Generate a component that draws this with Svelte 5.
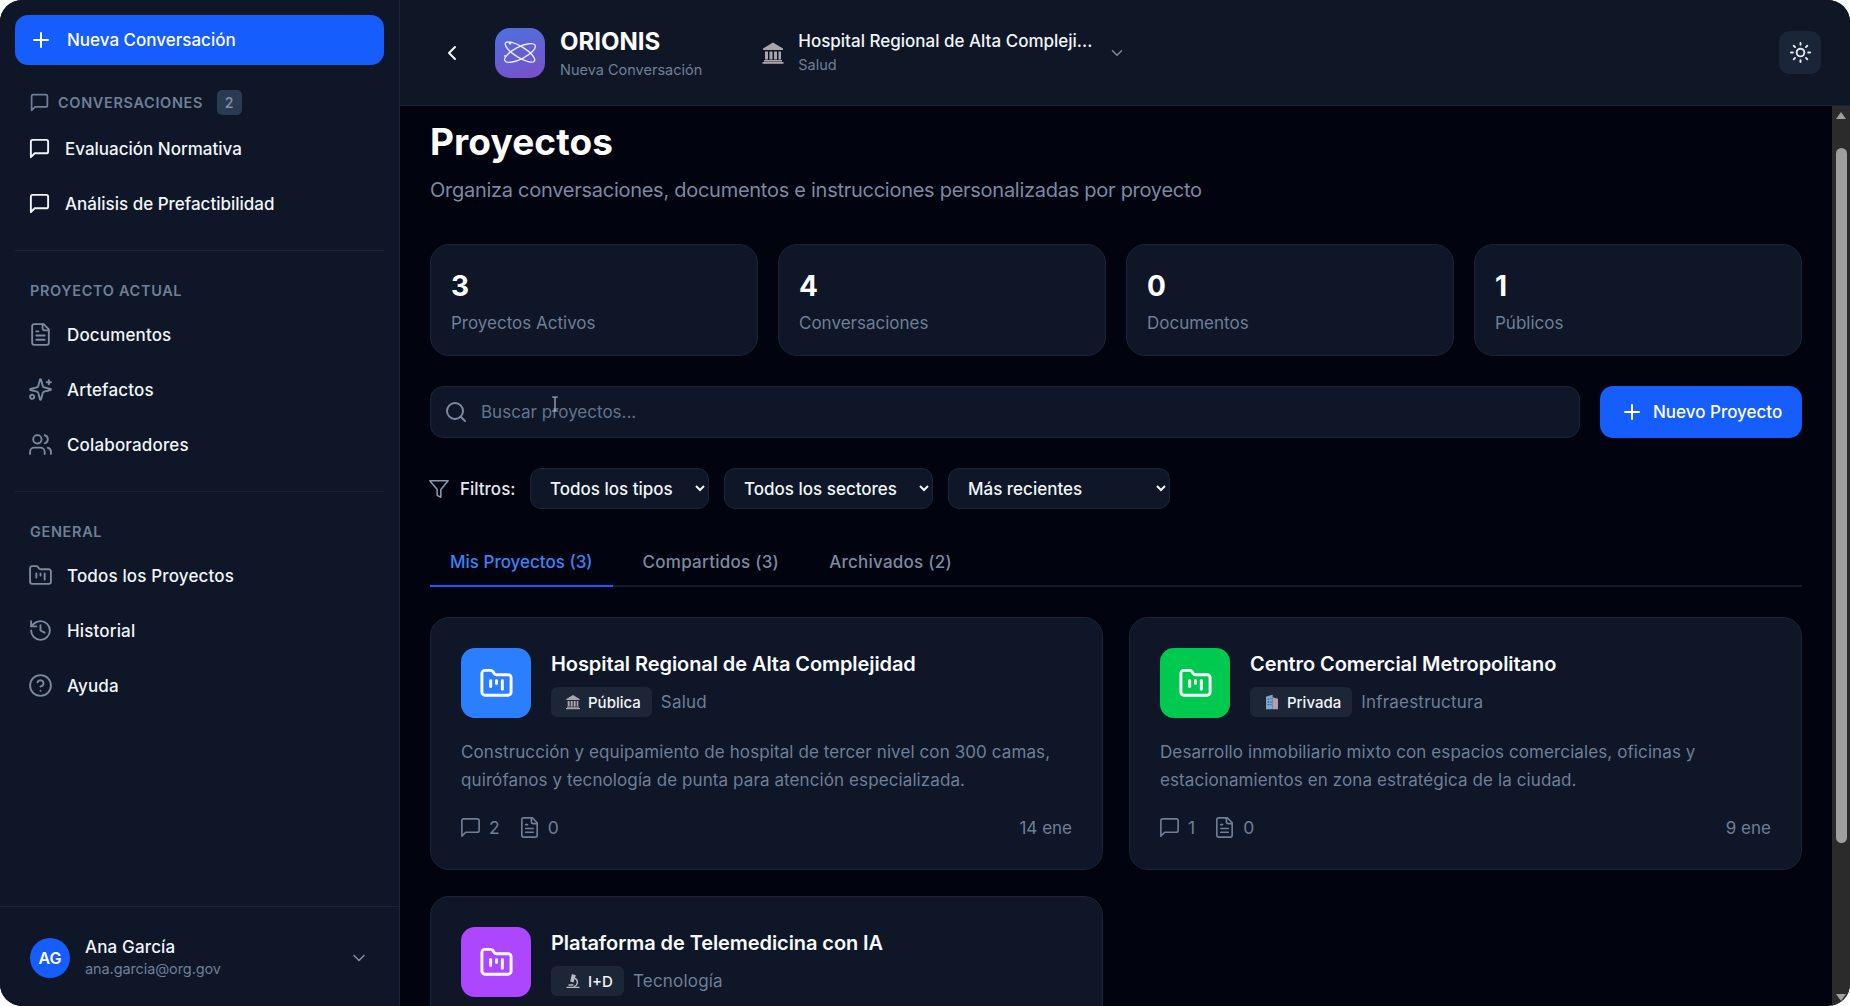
<script>
  const icons = {
    msg: ['M21 15a2 2 0 0 1-2 2H7l-4 4V5a2 2 0 0 1 2-2h14a2 2 0 0 1 2 2z'],
    file: ['M15 2H6a2 2 0 0 0-2 2v16a2 2 0 0 0 2 2h12a2 2 0 0 0 2-2V7Z', 'M14 2v4a2 2 0 0 0 2 2h4', 'M10 9H8', 'M16 13H8', 'M16 17H8'],
    spark: ['M9.937 15.5A2 2 0 0 0 8.5 14.063l-6.135-1.582a.5.5 0 0 1 0-.962L8.5 9.936A2 2 0 0 0 9.937 8.5l1.582-6.135a.5.5 0 0 1 .963 0L14.063 8.5A2 2 0 0 0 15.5 9.937l6.135 1.581a.5.5 0 0 1 0 .964L15.5 14.063a2 2 0 0 0-1.437 1.437l-1.582 6.135a.5.5 0 0 1-.963 0z', 'M20 3v4', 'M22 5h-4', 'M6 19a2 2 0 1 1-4 0 2 2 0 0 1 4 0z'],
    users: ['M16 21v-2a4 4 0 0 0-4-4H6a4 4 0 0 0-4 4v2', 'M13 7a4 4 0 1 1-8 0 4 4 0 0 1 8 0z', 'M22 21v-2a4 4 0 0 0-3-3.87', 'M16 3.13a4 4 0 0 1 0 7.75'],
    folder: ['M4 20h16a2 2 0 0 0 2-2V8a2 2 0 0 0-2-2h-7.93a2 2 0 0 1-1.66-.9l-.82-1.2A2 2 0 0 0 7.93 3H4a2 2 0 0 0-2 2v13c0 1.1.9 2 2 2Z', 'M8 10v4', 'M12 10v2', 'M16 10v6'],
    history: ['M3 12a9 9 0 1 0 9-9 9.75 9.75 0 0 0-6.74 2.74L3 8', 'M3 3v5h5', 'M12 7v5l4 2'],
    help: ['M22 12a10 10 0 1 1-20 0 10 10 0 0 1 20 0z', 'M9.09 9a3 3 0 0 1 5.83 1c0 2-3 3-3 3', 'M12 17h.01'],
    plus: ['M5 12h14', 'M12 5v14'],
    search: ['M19 11a8 8 0 1 1-16 0 8 8 0 0 1 16 0z', 'm21 21-4.3-4.3'],
    filter: ['M22 3H2l8 9.46V19l4 2v-8.54L22 3z'],
    down: ['m6 9 6 6 6-6'],
    left: ['m15 18-6-6 6-6'],
    sun: ['M16 12a4 4 0 1 1-8 0 4 4 0 0 1 8 0z', 'M12 2v2', 'M12 20v2', 'm4.93 4.93 1.41 1.41', 'm17.66 17.66 1.41 1.41', 'M2 12h2', 'M20 12h2', 'm6.34 17.66-1.41 1.41', 'm19.07 4.93-1.41 1.41']
  };

  const projectNav = [
    { icon: 'file', label: 'Documentos' },
    { icon: 'spark', label: 'Artefactos' },
    { icon: 'users', label: 'Colaboradores' }
  ];
  const generalNav = [
    { icon: 'folder', label: 'Todos los Proyectos' },
    { icon: 'history', label: 'Historial' },
    { icon: 'help', label: 'Ayuda' }
  ];
  const stats = [
    { value: '3', label: 'Proyectos Activos' },
    { value: '4', label: 'Conversaciones' },
    { value: '0', label: 'Documentos' },
    { value: '1', label: 'Públicos' }
  ];
  const filters = [
    { w: 'w1', options: ['Todos los tipos', 'Pública', 'Privada', 'I+D'] },
    { w: 'w2', options: ['Todos los sectores', 'Salud', 'Infraestructura', 'Tecnología'] },
    { w: 'w3', options: ['Más recientes', 'Más antiguos', 'Orden alfabético'] }
  ];
  const tabs = ['Mis Proyectos (3)', 'Compartidos (3)', 'Archivados (2)'];
  const projects = [
    { color: 'blue', title: 'Hospital Regional de Alta Complejidad', badge: 'Pública', kind: 'bank', sector: 'Salud',
      desc: 'Construcción y equipamiento de hospital de tercer nivel con 300 camas, quirófanos y tecnología de punta para atención especializada.', chats: 2, docs: 0, date: '14 ene' },
    { color: 'green', title: 'Centro Comercial Metropolitano', badge: 'Privada', kind: 'tower', sector: 'Infraestructura',
      desc: 'Desarrollo inmobiliario mixto con espacios comerciales, oficinas y estacionamientos en zona estratégica de la ciudad.', chats: 1, docs: 0, date: '9 ene' },
    { color: 'purple', title: 'Plataforma de Telemedicina con IA', badge: 'I+D', kind: 'scope', sector: 'Tecnología', desc: '', chats: 0, docs: 0, date: '' }
  ];
</script>

{#snippet icon(name, cls = '')}
  <svg class="ico {cls}" viewBox="0 0 24 24" fill="none" stroke="currentColor" stroke-width="2" stroke-linecap="round" stroke-linejoin="round">
    {#each icons[name] as d}<path {d} />{/each}
  </svg>
{/snippet}

{#snippet bank(cls)}
  <svg class={cls} viewBox="0 0 24 24" fill="#a9a5ad"><path d="M12 1.5 2 7.5v1.5h20V7.5z" /><rect x="4" y="10.5" width="3" height="8" /><rect x="8.5" y="10.5" width="3" height="8" /><rect x="13" y="10.5" width="3" height="8" /><rect x="17.5" y="10.5" width="2.5" height="8" /><rect x="3" y="19" width="18" height="1.6" /><rect x="1.5" y="21" width="21" height="1.8" /></svg>
{/snippet}

{#snippet tower(cls)}
  <svg class={cls} viewBox="0 0 24 24"><path fill="#7fa8cf" d="M3 4l10-3v22H3z" /><path fill="#b79ab3" d="M13 5l8 2v16h-8z" /><path fill="#3f6f9e" d="M5 7h3v2H5zM9.500 6h2v2h-2zM5 11h3v2H5zM9.500 11h2v2h-2zM5 15h3v2H5zM9.500 15h2v2h-2z" /></svg>
{/snippet}

{#snippet scope(cls)}
  <svg class={cls} viewBox="0 0 24 24" fill="none" stroke="#b9bcc6" stroke-width="2" stroke-linecap="round"><path d="M3 21.5h18" /><path d="M11 3l4 1-3 9-3-1z" fill="#b9bcc6" /><path d="M15 8a6.5 6.5 0 0 1-1 12" /><path d="M6 18h6" /></svg>
{/snippet}

<div class="window">
  <aside class="sidebar">
    <div class="side-scroll">
      <button class="new-chat">{@render icon('plus', 'i24')}<span>Nueva Conversación</span></button>

      <div class="conv-head">
        {@render icon('msg', 'i21')}
        <span class="caps">CONVERSACIONES</span>
        <span class="count">2</span>
      </div>
      <a class="conv-item" href="#e">{@render icon('msg', 'i23')}<span>Evaluación Normativa</span></a>
      <a class="conv-item" href="#a">{@render icon('msg', 'i23')}<span>Análisis de Prefactibilidad</span></a>

      <div class="divider"></div>

      <div class="caps section">PROYECTO ACTUAL</div>
      {#each projectNav as n}
        <a class="nav-item" href="#n">{@render icon(n.icon, 'i25 dim')}<span>{n.label}</span></a>
      {/each}

      <div class="divider"></div>

      <div class="caps section">GENERAL</div>
      {#each generalNav as n}
        <a class="nav-item" href="#n">{@render icon(n.icon, 'i25 dim')}<span>{n.label}</span></a>
      {/each}
    </div>

    <div class="user">
      <div class="avatar">AG</div>
      <div class="user-text">
        <div class="user-name">Ana García</div>
        <div class="user-mail">ana.garcia@org.gov</div>
      </div>
      {@render icon('down', 'i20 dim')}
    </div>
  </aside>

  <div class="column">
    <header class="topbar">
      <button class="back">{@render icon('left', 'i24')}</button>
      <div class="logo">
        <svg viewBox="0 0 50 50" fill="none" stroke="#e6e8fb" stroke-width="1.4" stroke-linecap="round">
          <ellipse cx="25" cy="24" rx="17" ry="5.500" transform="rotate(32 25 24)" />
          <ellipse cx="25" cy="25" rx="17" ry="6" transform="rotate(-27 25 25)" />
          <circle cx="15" cy="15" r="1.500" fill="#e6e8fb" stroke="none" />
          <circle cx="10" cy="28" r="1" fill="#e6e8fb" stroke="none" />
        </svg>
      </div>
      <div class="brand">
        <div class="brand-name">ORIONIS</div>
        <div class="brand-sub">Nueva Conversación</div>
      </div>
      <div class="context">
        {@render bank('ctx-bank')}
        <div class="ctx-text">
          <div class="ctx-name">Hospital Regional de Alta Compleji...</div>
          <div class="ctx-sub">Salud</div>
        </div>
        {@render icon('down', 'i18 ctx-down')}
      </div>
      <button class="theme">{@render icon('sun', 'i23')}</button>
    </header>

    <div class="body">
      <main class="content">
        <h1>Proyectos</h1>
        <p class="lead">Organiza conversaciones, documentos e instrucciones personalizadas por proyecto</p>

        <section class="stats">
          {#each stats as s}
            <div class="stat">
              <div class="stat-value">{s.value}</div>
              <div class="stat-label">{s.label}</div>
            </div>
          {/each}
        </section>

        <section class="search-row">
          <label class="search">
            {@render icon('search', 'i24 dim')}
            <input type="text" placeholder="Buscar proyectos..." />
            <svg class="caret" viewBox="0 0 10 16" fill="none" stroke="#b4bac4" stroke-width="1.2" stroke-linecap="round">
              <path d="M2.500 1h5M5 1v14M2.500 15h5" />
            </svg>
          </label>
          <button class="new-project">{@render icon('plus', 'i24')}<span>Nuevo Proyecto</span></button>
        </section>

        <section class="filters">
          {@render icon('filter', 'i22 filter-ico')}
          <span class="filter-label">Filtros:</span>
          {#each filters as f}
            <select class={f.w}>
              {#each f.options as o}<option>{o}</option>{/each}
            </select>
          {/each}
        </section>

        <nav class="tabs">
          {#each tabs as t, i}
            <button class="tab" class:active={i === 0}>{t}</button>
          {/each}
        </nav>

        <section class="grid">
          {#each projects as p}
            <article class="card">
              <div class="card-head">
                <div class="tile {p.color}">{@render icon('folder', 'i35')}</div>
                <div class="card-titles">
                  <h2>{p.title}</h2>
                  <div class="tags">
                    <span class="badge">
                      {#if p.kind === 'bank'}{@render bank('badge-ico')}{:else if p.kind === 'tower'}{@render tower('badge-ico')}{:else}{@render scope('badge-ico')}{/if}
                      {p.badge}
                    </span>
                    <span class="sector">{p.sector}</span>
                  </div>
                </div>
              </div>
              {#if p.desc}
                <p class="desc">{p.desc}</p>
                <div class="meta">
                  <span class="m">{@render icon('msg', 'i23 thin')}{p.chats}</span>
                  <span class="m">{@render icon('file', 'i23 thin')}{p.docs}</span>
                  <span class="date">{p.date}</span>
                </div>
              {/if}
            </article>
          {/each}
        </section>
      </main>

      <div class="scrollbar">
        <span class="arrow up"></span>
        <span class="thumb"></span>
        <span class="arrow dn"></span>
      </div>
    </div>
  </div>
</div>

<style>
  :global(body) {
    margin: 0;
    background: #fff;
    overflow: hidden;
  }
  * { box-sizing: border-box; }
  a { text-decoration: none; color: inherit; }
  button { font: inherit; border: 0; cursor: pointer; }

  .window {
    width: 1850px;
    height: 1006px;
    display: flex;
    overflow: hidden;
    border-radius: 22px;
    background: #01030f;
    font-family: Inter, "Liberation Sans", sans-serif;
    color: #f1f5f9;
  }
  .ico { flex: none; display: block; }
  .i18 { width: 18px; height: 18px; }
  .i20 { width: 20px; height: 20px; }
  .i21 { width: 21px; height: 21px; }
  .i22 { width: 22px; height: 22px; stroke-width: 1.7; }
  .i23 { width: 23px; height: 23px; }
  .i24 { width: 24px; height: 24px; }
  .i25 { width: 25px; height: 25px; stroke-width: 1.8; }
  .i35 { width: 35px; height: 35px; }
  .thin { stroke-width: 1.7; }
  .dim { color: #7c8aa0; }

  .sidebar {
    width: 400px;
    flex: none;
    display: flex;
    flex-direction: column;
    background: #0e1628;
    border-right: 1px solid #1a2436;
  }
  .side-scroll {
    flex: 1;
    padding: 15px 15px 0;
    display: flex;
    flex-direction: column;
  }
  .new-chat {
    height: 50px;
    display: flex;
    align-items: center;
    gap: 14px;
    padding: 0 0 0 14px;
    border-radius: 13px;
    background: #155dfc;
    color: #fff;
    font-size: 17px;
    font-weight: 500;
  }
  .conv-head {
    display: flex;
    align-items: center;
    gap: 8.5px;
    height: 26px;
    margin-top: 24px;
    padding-left: 13.5px;
    color: #6f7f96;
  }
  .caps {
    font-size: 14.5px;
    font-weight: 600;
    letter-spacing: 0.65px;
    color: #6f7f96;
  }
  .count {
    width: 25px;
    height: 25px;
    margin-left: 5px;
    border-radius: 5px;
    background: #2a3a50;
    display: grid;
    place-items: center;
    font-size: 14px;
    font-weight: 600;
    color: #7c8fa8;
  }
  .conv-item {
    display: flex;
    align-items: center;
    gap: 14px;
    height: 55px;
    padding-left: 13px;
    font-size: 17px;
    font-weight: 500;
    color: #f1f5f9;
  }
  .conv-head + .conv-item { margin-top: 6px; }
  .divider {
    height: 1px;
    background: #1a2436;
    margin-top: 19px;
    flex: none;
  }
  .section {
    padding-left: 15px;
    margin-top: 31px;
    margin-bottom: 7px;
    line-height: 18px;
  }
  .nav-item {
    display: flex;
    align-items: center;
    gap: 14px;
    height: 55px;
    padding-left: 13px;
    font-size: 17px;
    font-weight: 500;
    letter-spacing: 0.15px;
    color: #f1f5f9;
  }
  .user {
    height: 100px;
    border-top: 1px solid #1a2436;
    display: flex;
    align-items: center;
    padding: 2px 30px 0 30px;
    gap: 15px;
  }
  .avatar {
    width: 40px;
    height: 40px;
    border-radius: 50%;
    background: #155dfc;
    display: grid;
    place-items: center;
    font-size: 16px;
    font-weight: 600;
    color: #fff;
    flex: none;
  }
  .user-text { flex: 1; }
  .user-name { font-size: 17px; font-weight: 500; letter-spacing: 0.15px; line-height: 22px; }
  .user-mail { font-size: 14.5px; color: #6f7f96; line-height: 22px; letter-spacing: -0.1px; }

  .column {
    flex: 1;
    min-width: 0;
    display: flex;
    flex-direction: column;
  }
  .topbar {
    height: 106px;
    flex: none;
    display: flex;
    align-items: center;
    background: #0f1727;
    border-bottom: 1px solid #1a2436;
    padding: 0 29px 0 40px;
  }
  .back {
    width: 24px;
    height: 24px;
    padding: 0;
    background: none;
    color: #f1f5f9;
  }
  .logo {
    width: 50px;
    height: 50px;
    margin-left: 31px;
    border-radius: 15px;
    background: linear-gradient(160deg, #4a72e0, #7d4ec6);
    flex: none;
  }
  .logo svg { display: block; }
  .brand { margin-left: 15px; padding-top: 2px; }
  .brand-name { font-size: 24px; font-weight: 700; line-height: 30px; color: #fff; }
  .brand-sub { font-size: 14.5px; line-height: 22px; margin-top: 2px; color: #6f7f96; }
  .context {
    display: flex;
    align-items: center;
    margin-left: 59px;
  }
  .ctx-bank { width: 24px; height: 24px; flex: none; }
  .ctx-text { margin-left: 13px; width: 310px; }
  .ctx-name { font-size: 17px; font-weight: 500; line-height: 24px; margin-top: -2px; color: #f1f5f9; white-space: nowrap; }
  .ctx-sub { font-size: 14.5px; line-height: 20px; margin-top: 2px; color: #6f7f96; }
  .ctx-down { color: #7c8aa0; }
  .theme {
    margin-left: auto;
    width: 42px;
    height: 43px;
    border-radius: 11px;
    background: #1a2638;
    color: #e2e8f0;
    display: grid;
    place-items: center;
    padding: 0;
  }

  .body {
    flex: 1;
    min-height: 0;
    display: flex;
  }
  .content {
    flex: 1;
    min-width: 0;
    overflow: hidden;
    padding: 14px 30px 0;
  }
  h1 {
    margin: 0;
    font-size: 37px;
    line-height: 44px;
    font-weight: 700;
    letter-spacing: 0.1px;
    color: #fff;
  }
  .lead {
    margin: 12px 0 0;
    font-size: 20px;
    line-height: 28px;
    color: #7c8aa0;
    letter-spacing: -0.27px;
  }
  .stats {
    display: grid;
    grid-template-columns: repeat(4, 1fr);
    gap: 20px;
    margin-top: 40px;
  }
  .stat {
    height: 112px;
    padding: 23px 20px 0;
    background: #0e1628;
    border: 1px solid #1b2537;
    border-radius: 19px;
  }
  .stat-value { font-size: 28px; font-weight: 700; line-height: 36px; color: #fff; }
  .stat-label { font-size: 17px; line-height: 26px; margin-top: 6px; color: #6f7f96; }

  .search-row {
    display: flex;
    gap: 20px;
    margin-top: 30px;
  }
  .search {
    flex: 1;
    height: 52px;
    display: flex;
    align-items: center;
    gap: 13px;
    padding-left: 13px;
    background: #0e1628;
    border: 1px solid #1b2537;
    border-radius: 13px;
    position: relative;
  }
  .search input {
    flex: 1;
    background: none;
    border: 0;
    outline: 0;
    padding: 0;
    font: inherit;
    font-size: 17px;
    color: #f1f5f9;
  }
  .search input::placeholder { color: #64748b; opacity: 1; }
  .caret {
    position: absolute;
    left: 119px;
    top: 9px;
    width: 10px;
    height: 16px;
  }
  .new-project {
    width: 202px;
    height: 52px;
    display: flex;
    align-items: center;
    gap: 9px;
    padding-left: 20px;
    border-radius: 13px;
    background: #155dfc;
    color: #fff;
    font-size: 17px;
    font-weight: 500;
  }

  .filters {
    display: flex;
    align-items: center;
    margin-top: 30px;
    height: 41px;
  }
  .filter-ico { color: #8d99ab; margin-left: -2px; }
  .filter-label { margin-left: 10px; font-size: 17px; font-weight: 500; color: #e2e8f0; width: 55px; white-space: nowrap; }
  select {
    height: 41px;
    margin-left: 15px;
    padding: 0 4px 0 15px;
    background: #0e1628;
    border: 1px solid #1b2537;
    border-radius: 11px;
    font: inherit;
    font-size: 17px;
    font-weight: 500;
    color: #f1f5f9;
    color-scheme: dark;
    outline: 0;
  }
  .w1 { width: 179px; }
  .w2 { width: 209px; }
  .w3 { width: 222px; }

  .tabs {
    display: flex;
    margin-top: 24px;
    height: 54px;
    border-bottom: 2px solid #131c2c;
  }
  .tab {
    height: 54px;
    padding: 5px 20px 0;
    margin-right: 10px;
    background: none;
    color: #7c8aa0;
    font-size: 17px;
    font-weight: 500;
    letter-spacing: 0.25px;
    border-bottom: 2px solid transparent;
  }
  .tab.active {
    color: #3b82f6;
    letter-spacing: 0;
    border-bottom-color: #155dfc;
  }

  .grid {
    display: grid;
    grid-template-columns: 1fr 1fr;
    gap: 26px;
    margin-top: 30px;
  }
  .card {
    height: 253px;
    padding: 30px;
    background: #0e1628;
    border: 1px solid #1b2537;
    border-radius: 19px;
  }
  .card-head { display: flex; gap: 20px; }
  .tile {
    width: 70px;
    height: 70px;
    border-radius: 14px;
    display: grid;
    place-items: center;
    color: #fff;
    flex: none;
  }
  .blue { background: #2b7fff; }
  .green { background: #00c950; }
  .purple { background: #ad46ff; }
  h2 {
    margin: 0;
    font-size: 20px;
    line-height: 32px;
    font-weight: 600;
    letter-spacing: -0.08px;
    color: #f8fafc;
  }
  .tags { display: flex; align-items: center; gap: 9px; margin-top: 7px; }
  .badge {
    display: flex;
    align-items: center;
    gap: 7px;
    height: 30px;
    padding: 0 11px 0 14px;
    border-radius: 6px;
    background: #1c2637;
    font-size: 15px;
    font-weight: 500;
    color: #f1f5f9;
  }
  .badge-ico { width: 16px; height: 16px; flex: none; }
  .sector { font-size: 17px; color: #6f7f96; letter-spacing: 0.2px; }
  .desc {
    margin: 20px 0 0;
    font-size: 17px;
    line-height: 28px;
    color: #6f7f96;
    letter-spacing: 0.1px;
  }
  .meta {
    display: flex;
    align-items: center;
    gap: 18px;
    margin-top: 22px;
    margin-left: -2px;
    font-size: 17.5px;
    color: #6f7f96;
  }
  .m { display: flex; align-items: center; gap: 7px; }
  .date { margin-left: auto; font-size: 17px; }

  .scrollbar {
    width: 18px;
    flex: none;
    background: #2b2b2b;
    display: flex;
    flex-direction: column;
    align-items: center;
    padding: 6px 0 5px;
  }
  .thumb {
    width: 11px;
    height: 695px;
    margin-top: 29px;
    border-radius: 6px;
    background: #9f9f9f;
  }
  .arrow {
    width: 0;
    height: 0;
    border-left: 5px solid transparent;
    border-right: 5px solid transparent;
  }
  .up { border-bottom: 7px solid #9f9f9f; }
  .dn { border-top: 7px solid #9f9f9f; margin-top: auto; }
</style>
